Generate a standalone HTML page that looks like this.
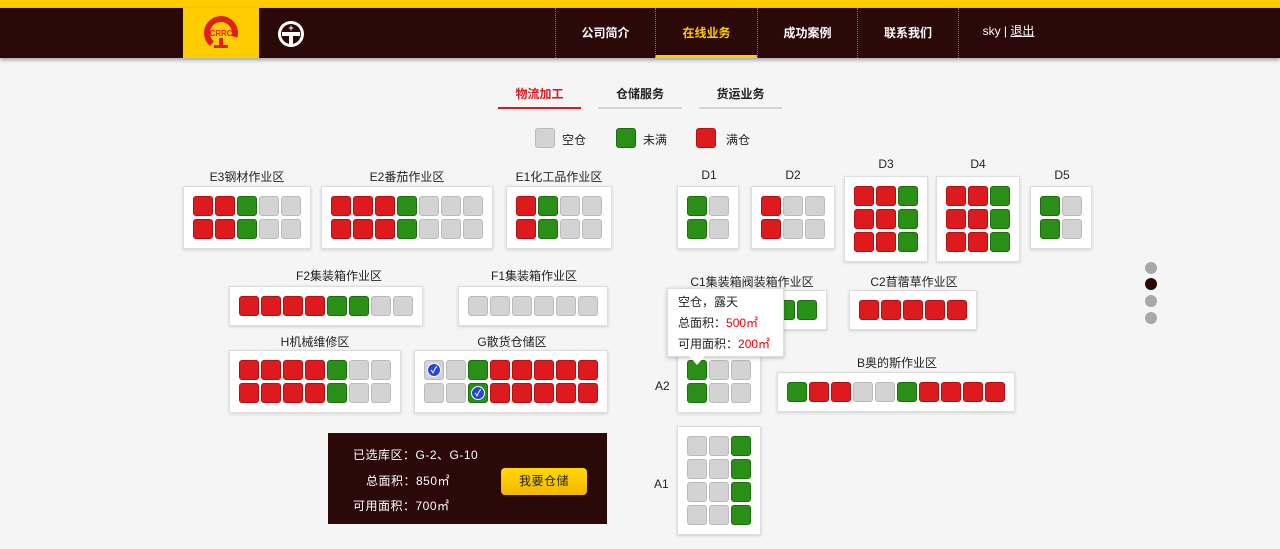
<!DOCTYPE html>
<html><head><meta charset="utf-8"><style>
*{margin:0;padding:0;box-sizing:border-box}
body{width:1280px;height:549px;background:#f5f5f5;font-family:"Liberation Sans","Noto Sans CJK SC",sans-serif;font-size:12px;color:#222;position:relative;overflow:hidden}
.a{position:absolute}
.top{left:0;top:0;width:1280px;height:8px;background:#ffcc00}
.hd{left:0;top:8px;width:1280px;height:50px;background:#2b0909;box-shadow:0 2px 4px rgba(0,0,0,.35)}
.logo{left:183px;top:8px;width:76px;height:50px;background:#ffcc00}
.nav{top:8px;height:50px;line-height:50px;color:#fff;font-weight:bold;font-size:12px;text-align:center;border-left:1px dotted #777}
.box{position:absolute;background:#fff;border:1px solid #ddd;box-shadow:0 1px 3px rgba(0,0,0,.15);padding:9px 9px;display:grid;gap:3px 2px}
.box i{display:block;width:20px;height:20px;border-radius:3px;position:relative}
.r{background:#dd1a1e;border:1px solid #b31014}
.g{background:#2a8f16;border:1px solid #1d6e0c}
.e{background:#d3d3d3;border:1px solid #bbb}
.lb{position:absolute;font-size:12px;color:#222;text-align:center}
.ck{position:absolute;left:2px;top:2px;width:14px;height:14px;border-radius:50%;background:#2545e0;border:1px solid #fff;color:#fff;font-size:9px;line-height:12px;text-align:center;font-style:normal}
.dot{left:1145px;width:12px;height:12px;border-radius:50%;background:#a8a8a8}
</style></head><body>
<div class="a top"></div>
<div class="a hd"></div>
<div class="a logo"><svg width="76" height="50"><circle cx="38" cy="25" r="14" fill="none" stroke="#e02020" stroke-width="6" stroke-dasharray="60 28" transform="rotate(130 38 25)"/><text x="38" y="28" font-size="8" font-weight="bold" fill="#e02020" text-anchor="middle" font-family="Liberation Sans">CRRC</text><rect x="36" y="30" width="4" height="8" fill="#e02020"/><rect x="31" y="37" width="14" height="3" fill="#e02020"/></svg></div>
<svg class="a" style="left:276px;top:19px" width="30" height="30"><circle cx="15" cy="15" r="13" fill="#fff"/><circle cx="15" cy="15" r="10" fill="#2b0909"/><rect x="6" y="13" width="18" height="4" fill="#fff"/><rect x="13" y="15" width="4" height="10" fill="#fff"/><text x="15" y="12" font-size="9" fill="#fff" text-anchor="middle" font-weight="bold">+</text></svg>
<div class="a nav" style="left:555px;width:100px">公司简介</div>
<div class="a nav" style="left:655px;width:102px;color:#ffcc00;border-bottom:3px solid #ffcc00">在线业务</div>
<div class="a nav" style="left:757px;width:100px">成功案例</div>
<div class="a nav" style="left:857px;width:101px">联系我们</div>
<div class="a nav" style="left:958px;width:100px;font-weight:normal;line-height:46px">sky | <u>退出</u></div>

<div class="a" style="left:498px;top:85px;width:83px;text-align:center;font-weight:bold;color:#d71920">物流加工</div>
<div class="a" style="left:498px;top:107px;width:83px;height:2px;background:#d71920"></div>
<div class="a" style="left:598px;top:85px;width:84px;text-align:center;font-weight:bold">仓储服务</div>
<div class="a" style="left:598px;top:107px;width:84px;height:2px;background:#d5d5d5"></div>
<div class="a" style="left:699px;top:85px;width:83px;text-align:center;font-weight:bold">货运业务</div>
<div class="a" style="left:699px;top:107px;width:83px;height:2px;background:#d5d5d5"></div>

<div class="a e" style="left:535px;top:128px;width:20px;height:20px;border-radius:3px"></div><div class="a" style="left:562px;top:131px">空仓</div>
<div class="a g" style="left:616px;top:128px;width:20px;height:20px;border-radius:3px"></div><div class="a" style="left:643px;top:131px">未满</div>
<div class="a r" style="left:696px;top:128px;width:20px;height:20px;border-radius:3px"></div><div class="a" style="left:726px;top:131px">满仓</div>

<div class="lb" style="left:183px;top:168px;width:128px">E3钢材作业区</div>
<div class="box" style="left:183px;top:186px;grid-template-columns:repeat(5,20px)"><i class=r></i><i class=r></i><i class=g></i><i class=e></i><i class=e></i><i class=r></i><i class=r></i><i class=g></i><i class=e></i><i class=e></i></div>
<div class="lb" style="left:321px;top:168px;width:172px">E2番茄作业区</div>
<div class="box" style="left:321px;top:186px;grid-template-columns:repeat(7,20px)"><i class=r></i><i class=r></i><i class=r></i><i class=g></i><i class=e></i><i class=e></i><i class=e></i><i class=r></i><i class=r></i><i class=r></i><i class=g></i><i class=e></i><i class=e></i><i class=e></i></div>
<div class="lb" style="left:506px;top:168px;width:106px">E1化工品作业区</div>
<div class="box" style="left:506px;top:186px;grid-template-columns:repeat(4,20px)"><i class=r></i><i class=g></i><i class=e></i><i class=e></i><i class=r></i><i class=g></i><i class=e></i><i class=e></i></div>

<div class="lb" style="left:677px;top:168px;width:64px">D1</div>
<div class="box" style="left:677px;top:186px;grid-template-columns:repeat(2,20px)"><i class=g></i><i class=e></i><i class=g></i><i class=e></i></div>
<div class="lb" style="left:751px;top:168px;width:84px">D2</div>
<div class="box" style="left:751px;top:186px;grid-template-columns:repeat(3,20px)"><i class=r></i><i class=e></i><i class=e></i><i class=r></i><i class=e></i><i class=e></i></div>
<div class="lb" style="left:844px;top:157px;width:84px">D3</div>
<div class="box" style="left:844px;top:176px;grid-template-columns:repeat(3,20px)"><i class=r></i><i class=r></i><i class=g></i><i class=r></i><i class=r></i><i class=g></i><i class=r></i><i class=r></i><i class=g></i></div>
<div class="lb" style="left:936px;top:157px;width:84px">D4</div>
<div class="box" style="left:936px;top:176px;grid-template-columns:repeat(3,20px)"><i class=r></i><i class=r></i><i class=g></i><i class=r></i><i class=r></i><i class=g></i><i class=r></i><i class=r></i><i class=g></i></div>
<div class="lb" style="left:1030px;top:168px;width:64px">D5</div>
<div class="box" style="left:1030px;top:186px;grid-template-columns:repeat(2,20px)"><i class=g></i><i class=e></i><i class=g></i><i class=e></i></div>

<div class="lb" style="left:229px;top:267px;width:220px">F2集装箱作业区</div>
<div class="box" style="left:229px;top:286px;grid-template-columns:repeat(8,20px)"><i class=r></i><i class=r></i><i class=r></i><i class=r></i><i class=g></i><i class=g></i><i class=e></i><i class=e></i></div>
<div class="lb" style="left:458px;top:267px;width:152px">F1集装箱作业区</div>
<div class="box" style="left:458px;top:286px;grid-template-columns:repeat(6,20px)"><i class=e></i><i class=e></i><i class=e></i><i class=e></i><i class=e></i><i class=e></i></div>

<div class="lb" style="left:677px;top:273px;width:150px">C1集装箱阀装箱作业区</div>
<div class="box" style="left:677px;top:290px;grid-template-columns:repeat(6,20px)"><i class=e></i><i class=e></i><i class=e></i><i class=e></i><i class=g></i><i class=g></i></div>
<div class="lb" style="left:849px;top:273px;width:130px">C2苜蓿草作业区</div>
<div class="box" style="left:849px;top:290px;grid-template-columns:repeat(5,20px)"><i class=r></i><i class=r></i><i class=r></i><i class=r></i><i class=r></i></div>

<div class="lb" style="left:229px;top:333px;width:172px">H机械维修区</div>
<div class="box" style="left:229px;top:350px;grid-template-columns:repeat(7,20px)"><i class=r></i><i class=r></i><i class=r></i><i class=r></i><i class=g></i><i class=e></i><i class=e></i><i class=r></i><i class=r></i><i class=r></i><i class=r></i><i class=g></i><i class=e></i><i class=e></i></div>
<div class="lb" style="left:414px;top:333px;width:196px">G散货仓储区</div>
<div class="box" style="left:414px;top:350px;grid-template-columns:repeat(8,20px)"><i class=e><b class=ck>✓</b></i><i class=e></i><i class=g></i><i class=r></i><i class=r></i><i class=r></i><i class=r></i><i class=r></i><i class=e></i><i class=e></i><i class=g><b class=ck>✓</b></i><i class=r></i><i class=r></i><i class=r></i><i class=r></i><i class=r></i></div>

<div class="lb" style="left:655px;top:379px">A2</div>
<div class="box" style="left:677px;top:350px;grid-template-columns:repeat(3,20px)"><i class=g></i><i class=e></i><i class=e></i><i class=g></i><i class=e></i><i class=e></i></div>
<div class="lb" style="left:777px;top:354px;width:240px">B奥的斯作业区</div>
<div class="box" style="left:777px;top:372px;grid-template-columns:repeat(10,20px)"><i class=g></i><i class=r></i><i class=r></i><i class=e></i><i class=e></i><i class=g></i><i class=r></i><i class=r></i><i class=r></i><i class=r></i></div>
<div class="lb" style="left:654px;top:477px">A1</div>
<div class="box" style="left:677px;top:426px;grid-template-columns:repeat(3,20px)"><i class=e></i><i class=e></i><i class=g></i><i class=e></i><i class=e></i><i class=g></i><i class=e></i><i class=e></i><i class=g></i><i class=e></i><i class=e></i><i class=g></i></div>

<div class="a" style="left:667px;top:288px;width:117px;height:69px;background:#fff;border:1px solid #ddd;box-shadow:0 1px 4px rgba(0,0,0,.25);padding:3px 10px;font-size:12px;line-height:21px">空仓，露天<br>总面积：<span style="color:#e00">500㎡</span><br>可用面积：<span style="color:#e00">200㎡</span></div>
<div class="a" style="left:689px;top:356px;width:0;height:0;border-left:8px solid transparent;border-right:8px solid transparent;border-top:9px solid #fff"></div>

<div class="a" style="left:328px;top:433px;width:279px;height:91px;background:#2b0909;color:#fff;font-size:12px;letter-spacing:.5px">
<div class="a" style="left:25px;top:13px">已选库区：G-2、G-10</div>
<div class="a" style="left:38px;top:39px">总面积：850㎡</div>
<div class="a" style="left:25px;top:64px">可用面积：700㎡</div>
<div class="a" style="left:173px;top:35px;width:86px;height:27px;background:linear-gradient(#ffd700,#f5b800);border-radius:4px;color:#222;text-align:center;line-height:27px">我要仓储</div>
</div>

<div class="a dot" style="top:262px"></div>
<div class="a dot" style="top:278px;background:#2b0909"></div>
<div class="a dot" style="top:295px"></div>
<div class="a dot" style="top:312px"></div>
</body></html>
